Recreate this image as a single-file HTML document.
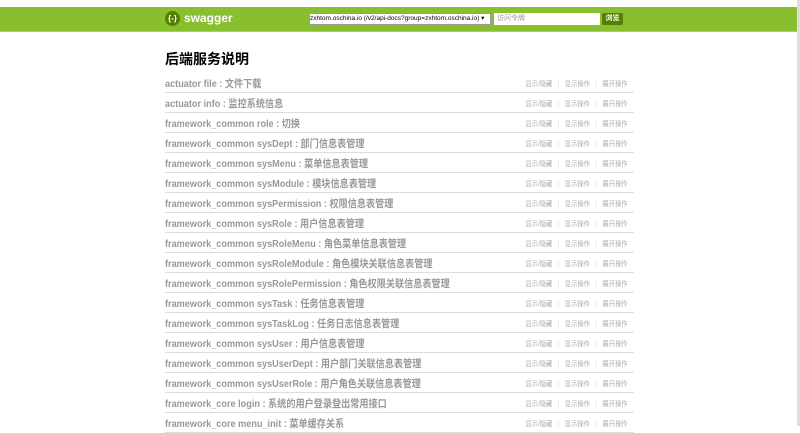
<!DOCTYPE html>
<html><head><meta charset="utf-8"><style>
body{margin:0;background:#fff;font-family:"Liberation Sans","Noto Sans CJK SC",sans-serif;width:800px;height:426px;overflow:hidden;position:relative}
.hdr{position:absolute;left:0;top:7px;width:797px;height:24px;background:#89bf2f;border-bottom:1px solid #a6d15a}
.logo{position:absolute;left:165px;top:4px;width:15px;height:15px;border-radius:50%;background:#547f00;color:#fff;font-size:8px;line-height:15px;text-align:center;font-weight:bold}
.brand{position:absolute;left:184px;top:4px;color:#fff;font-weight:bold;font-size:12px}
.sel{position:absolute;left:309px;top:6px;width:180px;height:10px;background:#fff;border:1px solid #999;font-size:6.5px;line-height:10px;white-space:nowrap;overflow:hidden;color:#000}
.inp{position:absolute;left:494px;top:6px;width:103px;height:12px;background:#fff;font-size:7px;line-height:12px;color:#999;padding-left:3px}
.btn{position:absolute;left:602px;top:6px;width:21px;height:12px;background:#547f00;color:#fff;font-size:7px;line-height:12px;text-align:center;border-radius:2px;font-weight:bold}
h1{position:absolute;left:165px;top:49px;margin:0;font-size:14px;font-weight:bold;color:#000}
.list{position:absolute;left:165px;top:73px;width:469px}
.row{height:19px;border-bottom:1px solid #ddd;position:relative}
.t{position:absolute;left:0;top:3px;font-size:10.5px;font-weight:bold;color:#999;white-space:nowrap;transform:scaleX(0.87);transform-origin:left}
.a{position:absolute;right:6px;top:6px;font-size:7px;color:#aaa;white-space:nowrap;transform:scaleX(0.9);transform-origin:right}
.a i{font-style:normal;color:#ddd;margin:0 6px}
.sb{position:absolute;left:797px;top:0;width:3px;height:426px;background:#ddd}
</style></head><body>
<div class="hdr"><div class="logo">{-}</div><div class="brand">swagger</div>
<div class="sel">zxhtom.oschina.io (/v2/api-docs?group=zxhtom.oschina.io) ▾</div>
<div class="inp">访问令牌</div><div class="btn">浏览</div></div>
<h1>后端服务说明</h1>
<div class="list">
<div class="row"><span class="t">actuator file : 文件下载</span><span class="a">显示/隐藏<i>|</i>显示操作<i>|</i>展开操作</span></div>
<div class="row"><span class="t">actuator info : 监控系统信息</span><span class="a">显示/隐藏<i>|</i>显示操作<i>|</i>展开操作</span></div>
<div class="row"><span class="t">framework_common role : 切换</span><span class="a">显示/隐藏<i>|</i>显示操作<i>|</i>展开操作</span></div>
<div class="row"><span class="t">framework_common sysDept : 部门信息表管理</span><span class="a">显示/隐藏<i>|</i>显示操作<i>|</i>展开操作</span></div>
<div class="row"><span class="t">framework_common sysMenu : 菜单信息表管理</span><span class="a">显示/隐藏<i>|</i>显示操作<i>|</i>展开操作</span></div>
<div class="row"><span class="t">framework_common sysModule : 模块信息表管理</span><span class="a">显示/隐藏<i>|</i>显示操作<i>|</i>展开操作</span></div>
<div class="row"><span class="t">framework_common sysPermission : 权限信息表管理</span><span class="a">显示/隐藏<i>|</i>显示操作<i>|</i>展开操作</span></div>
<div class="row"><span class="t">framework_common sysRole : 用户信息表管理</span><span class="a">显示/隐藏<i>|</i>显示操作<i>|</i>展开操作</span></div>
<div class="row"><span class="t">framework_common sysRoleMenu : 角色菜单信息表管理</span><span class="a">显示/隐藏<i>|</i>显示操作<i>|</i>展开操作</span></div>
<div class="row"><span class="t">framework_common sysRoleModule : 角色模块关联信息表管理</span><span class="a">显示/隐藏<i>|</i>显示操作<i>|</i>展开操作</span></div>
<div class="row"><span class="t">framework_common sysRolePermission : 角色权限关联信息表管理</span><span class="a">显示/隐藏<i>|</i>显示操作<i>|</i>展开操作</span></div>
<div class="row"><span class="t">framework_common sysTask : 任务信息表管理</span><span class="a">显示/隐藏<i>|</i>显示操作<i>|</i>展开操作</span></div>
<div class="row"><span class="t">framework_common sysTaskLog : 任务日志信息表管理</span><span class="a">显示/隐藏<i>|</i>显示操作<i>|</i>展开操作</span></div>
<div class="row"><span class="t">framework_common sysUser : 用户信息表管理</span><span class="a">显示/隐藏<i>|</i>显示操作<i>|</i>展开操作</span></div>
<div class="row"><span class="t">framework_common sysUserDept : 用户部门关联信息表管理</span><span class="a">显示/隐藏<i>|</i>显示操作<i>|</i>展开操作</span></div>
<div class="row"><span class="t">framework_common sysUserRole : 用户角色关联信息表管理</span><span class="a">显示/隐藏<i>|</i>显示操作<i>|</i>展开操作</span></div>
<div class="row"><span class="t">framework_core login : 系统的用户登录登出常用接口</span><span class="a">显示/隐藏<i>|</i>显示操作<i>|</i>展开操作</span></div>
<div class="row"><span class="t">framework_core menu_init : 菜单缓存关系</span><span class="a">显示/隐藏<i>|</i>显示操作<i>|</i>展开操作</span></div>
</div>
<div class="sb"></div>
</body></html>
